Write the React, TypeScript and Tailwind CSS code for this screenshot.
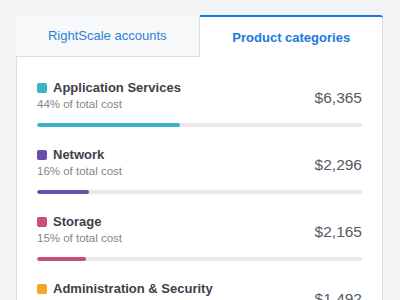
import React from "react";

const rows = [
  { name: "Application Services", pct: 44, amount: "$6,365", color: "#3bb2c8" },
  { name: "Network", pct: 16, amount: "$2,296", color: "#6a4cad" },
  { name: "Storage", pct: 15, amount: "$2,165", color: "#c84f7c" },
  { name: "Administration & Security", pct: 10, amount: "$1,492", color: "#f5a623" },
];

export default function App() {
  return (
    <div
      className="w-[400px] h-[300px] overflow-hidden bg-[#f2f3f5] pt-[15px] pl-[16px] pr-[17px]"
      style={{ fontFamily: '"Liberation Sans", Arial, sans-serif' }}
    >
      <div className="bg-white border border-[#dcdee2] rounded-t-[3px] h-[300px]">
        <div className="grid grid-cols-2 h-[41px]">
          <div className="bg-[#f7f8fa] border-r border-b border-[#dcdee2] flex items-center justify-center text-[13px] text-[#2d80d8] -mt-px -ml-px rounded-tl-[3px]">
            RightScale accounts
          </div>
          <div className="border-t-2 border-[#1b79e0] -mt-px -mr-px rounded-tr-[3px] flex items-center justify-center pt-[1px] text-[13px] font-bold text-[#1b79e0]">
            Product categories
          </div>
        </div>
        <div className="px-[20px] pt-[22px]">
          {rows.map((r) => (
            <div key={r.name} className="h-[67px]">
              <div className="flex justify-between items-center">
                <div className="flex flex-col">
                  <div className="flex items-center h-[18px]">
                    <span
                      className="w-[10px] h-[10px] rounded-[2px] mr-[6px]"
                      style={{ backgroundColor: r.color }}
                    />
                    <span className="text-[13px] font-bold text-[#3e4047]">{r.name}</span>
                  </div>
                  <div className="text-[11.5px] leading-[14px] text-[#7f8792]">
                    {r.pct}% of total cost
                  </div>
                </div>
                <div className="text-[15.5px] text-[#56595f] mt-[5px]">{r.amount}</div>
              </div>
              <div className="mt-[12px] h-[4px] rounded-full bg-[#e8e9ea] overflow-hidden">
                <div
                  className="h-full rounded-full"
                  style={{ width: `${r.pct}%`, backgroundColor: r.color }}
                />
              </div>
            </div>
          ))}
        </div>
      </div>
    </div>
  );
}
